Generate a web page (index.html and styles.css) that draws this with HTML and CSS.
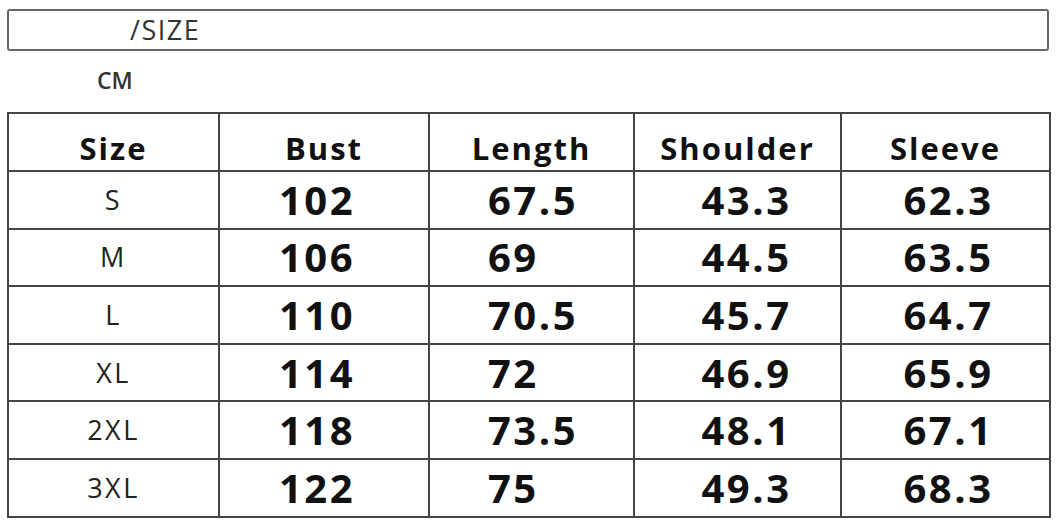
FILE: index.html
```html
<!DOCTYPE html>
<html>
<head>
<meta charset="utf-8">
<link rel="stylesheet" href="styles.css">
</head>
<body>
<div class="page">
  <div class="title-box">/SIZE</div>
  <div class="unit">CM</div>
  <table class="size-table">
    <colgroup>
      <col class="c-size"><col class="c-bust"><col class="c-length"><col class="c-shoulder"><col class="c-sleeve">
    </colgroup>
    <thead>
      <tr><th>Size</th><th>Bust</th><th>Length</th><th>Shoulder</th><th>Sleeve</th></tr>
    </thead>
    <tbody>
      <tr><td class="lbl">S</td><td class="bust">102</td><td class="len">67.5</td><td class="sho">43.3</td><td class="slv">62.3</td></tr>
      <tr><td class="lbl">M</td><td class="bust">106</td><td class="len">69</td><td class="sho">44.5</td><td class="slv">63.5</td></tr>
      <tr><td class="lbl">L</td><td class="bust">110</td><td class="len">70.5</td><td class="sho">45.7</td><td class="slv">64.7</td></tr>
      <tr><td class="lbl">XL</td><td class="bust">114</td><td class="len">72</td><td class="sho">46.9</td><td class="slv">65.9</td></tr>
      <tr><td class="lbl">2XL</td><td class="bust">118</td><td class="len">73.5</td><td class="sho">48.1</td><td class="slv">67.1</td></tr>
      <tr><td class="lbl">3XL</td><td class="bust">122</td><td class="len">75</td><td class="sho">49.3</td><td class="slv">68.3</td></tr>
    </tbody>
  </table>
</div>
</body>
</html>
```
FILE: styles.css
```css
html, body {
  margin: 0;
  background: #ffffff;
}
body {
  font-family: "Open Sans", "Noto Sans", "DejaVu Sans", sans-serif;
  color: #111;
}
.page {
  padding: 9px 11px 0 7px;
}
.title-box {
  box-sizing: border-box;
  height: 42px;
  border: 2px solid #666;
  border-radius: 3px;
  padding-left: 121px;
  font-size: 27px;
  line-height: 38px;
  color: #333;
  letter-spacing: 1.5px;
}
.unit {
  box-sizing: border-box;
  height: 61px;
  padding: 18px 0 0 90px;
  font-size: 23px;
  line-height: 22px;
  font-weight: 600;
  color: #333;
}
.size-table {
  width: 1042px;
  border-collapse: collapse;
  table-layout: fixed;
}
.c-size { width: 211px; }
.c-bust { width: 210px; }
.c-length { width: 205px; }
.c-shoulder { width: 207px; }
.c-sleeve { width: 209px; }
.size-table th,
.size-table td {
  border: 2px solid #444;
  text-align: center;
  padding: 0;
}
.size-table thead tr {
  height: 58px;
}
.size-table tbody tr {
  height: 57.6px;
}
.size-table th {
  font-size: 31px;
  font-weight: 700;
  letter-spacing: 2px;
  line-height: 44px;
  padding-top: 11px;
  color: #111;
}
.size-table td {
  font-size: 40px;
  font-weight: 700;
  letter-spacing: 2.5px;
  line-height: 54px;
  color: #111;
}
.size-table td.lbl {
  font-size: 27px;
  font-weight: 400;
  letter-spacing: 2.5px;
  color: #222;
}
.size-table td.bust {
  padding-right: 14px;
}
.size-table td.len {
  text-align: left;
  padding-left: 58px;
}
.size-table td.sho {
  padding-left: 18px;
}
.size-table td.slv {
  padding-left: 6px;
}
```
